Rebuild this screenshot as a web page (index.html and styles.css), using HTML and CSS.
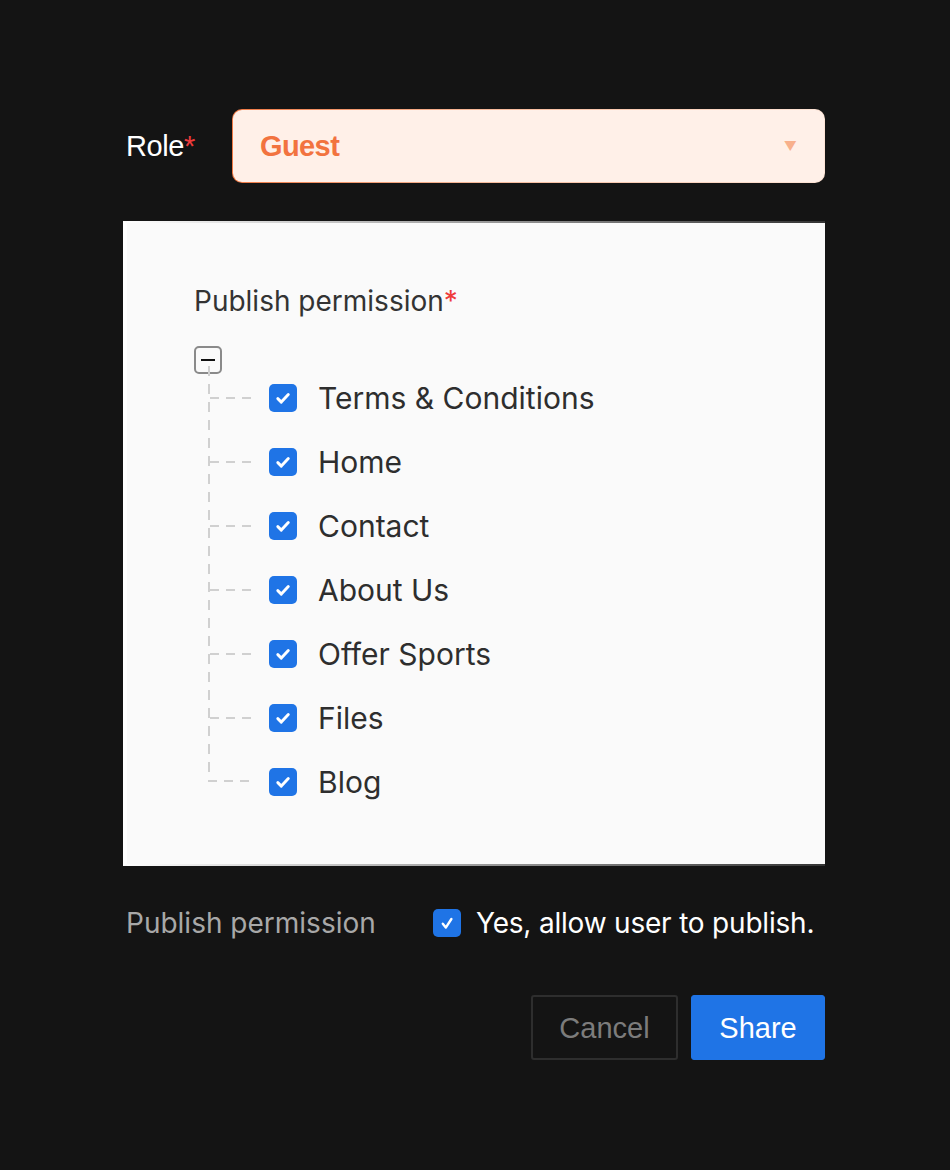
FILE: index.html
```html
<!DOCTYPE html>
<html>
<head>
<meta charset="utf-8">
<link rel="stylesheet" href="styles.css">
</head>
<body>
<div class="page">
  <div class="role-row">
    <div class="role-label">Role<span class="req">*</span></div>
    <div class="select">
      <span class="select-value">Guest</span>
      <span class="select-arrow">&#9660;</span>
    </div>
  </div>

  <div class="panel">
    <div class="panel-title">Publish permission<span class="req">*</span></div>
    <div class="tree">
      <div class="collapse"><span class="minus"></span></div>
      <div class="children">
        <div class="item"><span class="branch"></span><span class="cb"><svg viewBox="0 0 28 28"><path d="M8.8 14.6l3.5 3.5 7-7.6" /></svg></span><span class="item-text">Terms &amp; Conditions</span></div>
        <div class="item"><span class="branch"></span><span class="cb"><svg viewBox="0 0 28 28"><path d="M8.8 14.6l3.5 3.5 7-7.6" /></svg></span><span class="item-text">Home</span></div>
        <div class="item"><span class="branch"></span><span class="cb"><svg viewBox="0 0 28 28"><path d="M8.8 14.6l3.5 3.5 7-7.6" /></svg></span><span class="item-text">Contact</span></div>
        <div class="item"><span class="branch"></span><span class="cb"><svg viewBox="0 0 28 28"><path d="M8.8 14.6l3.5 3.5 7-7.6" /></svg></span><span class="item-text">About Us</span></div>
        <div class="item"><span class="branch"></span><span class="cb"><svg viewBox="0 0 28 28"><path d="M8.8 14.6l3.5 3.5 7-7.6" /></svg></span><span class="item-text">Offer Sports</span></div>
        <div class="item"><span class="branch"></span><span class="cb"><svg viewBox="0 0 28 28"><path d="M8.8 14.6l3.5 3.5 7-7.6" /></svg></span><span class="item-text">Files</span></div>
        <div class="item last"><span class="branch"></span><span class="cb"><svg viewBox="0 0 28 28"><path d="M8.8 14.6l3.5 3.5 7-7.6" /></svg></span><span class="item-text">Blog</span></div>
      </div>
    </div>
  </div>

  <div class="publish-row">
    <div class="publish-label">Publish permission</div>
    <div class="publish-opt">
      <span class="cb small"><svg viewBox="0 0 28 28"><path d="M9.8 14.8l3 3.8 5.6-8.6" /></svg></span>
      <span class="publish-text">Yes, allow user to publish.</span>
    </div>
  </div>

  <div class="actions">
    <button class="btn cancel">Cancel</button>
    <button class="btn share">Share</button>
  </div>
</div>
</body>
</html>
```

FILE: styles.css
```css
html, body {
  margin: 0;
  padding: 0;
  background: #141414;
}
body {
  width: 950px;
  height: 1170px;
  font-family: Inter, "Noto Sans", sans-serif;
}
.page {
  padding: 109px 125px 0 123px;
  display: flex;
  flex-direction: column;
}
.req { color: #ef3b3b; }

.role-row {
  display: flex;
  align-items: center;
  height: 74px;
}
.role-label {
  width: 109px;
  padding-left: 3px;
  box-sizing: border-box;
  font-family: "Liberation Sans", Arial, sans-serif;
  font-size: 29px;
  color: #ffffff;
  letter-spacing: -0.4px;
}
.select {
  flex: 1;
  height: 74px;
  box-sizing: border-box;
  border-radius: 10px;
  background: #fff0e8;
  border: 1.5px solid transparent;
  background-image: linear-gradient(#fff0e8, #fff0e8), linear-gradient(90deg, #f07a45 0%, #f7b898 40%, #fde4d6 100%);
  background-origin: border-box;
  background-clip: padding-box, border-box;
  display: flex;
  align-items: center;
  padding: 0 27px 0 27px;
}
.select-value {
  flex: 1;
  font-family: "Liberation Sans", Arial, sans-serif;
  font-size: 29px;
  font-weight: bold;
  color: #f2733f;
  letter-spacing: -0.6px;
}
.select-arrow {
  color: #f8b08c;
  font-size: 13px;
}

.panel {
  margin-top: 38px;
  height: 645px;
  box-sizing: border-box;
  background: #fafafa;
  border-left: 4px solid #ffffff;
  border-top: 2px solid transparent;
  border-bottom: 2px solid transparent;
  background-image: linear-gradient(#fafafa, #fafafa), linear-gradient(90deg, #ffffff 0%, #888 60%, #333 100%);
  background-origin: border-box;
  background-clip: padding-box, border-box;
  padding: 60px 0 0 67px;
}
.panel-title {
  font-size: 28px;
  color: #333333;
  line-height: 36px;
}
.tree {
  margin-top: 27px;
}
.collapse {
  width: 28px;
  height: 28px;
  box-sizing: border-box;
  border: 2px solid #8a8a8a;
  border-radius: 5px;
  display: flex;
  align-items: center;
  justify-content: center;
}
.minus {
  width: 14px;
  height: 2px;
  background: #111;
}
.children {
  margin-left: 14px;
  margin-top: 8px;
  background-image: repeating-linear-gradient(180deg, #d0d0d0 0 10px, transparent 10px 18px);
  background-size: 2px 100%;
  background-repeat: no-repeat;
  background-position: 0 0;
}
.item {
  height: 64px;
  display: flex;
  align-items: center;
}
.item:first-child { margin-top: -16px; }
.item.last { height: 32px; align-items: flex-end; }
.item.last .cb { margin-bottom: -14px; }
.item.last .branch { align-self: flex-end; }
.item.last .item-text { margin-bottom: -18px; }
.branch {
  width: 44px;
  height: 2px;
  background-image: repeating-linear-gradient(90deg, #d0d0d0 0 9px, transparent 9px 16px);
  margin-left: 2px;
  margin-right: 15px;
}
.item.last .branch {
  width: 46px;
  margin-left: 0;
}
.cb {
  width: 28px;
  height: 28px;
  border-radius: 5px;
  background: #1f74e6;
  display: inline-flex;
  flex-shrink: 0;
}
.cb svg {
  width: 28px;
  height: 28px;
  fill: none;
  stroke: #ffffff;
  stroke-width: 2.9;
  stroke-linecap: round;
  stroke-linejoin: round;
}
.item-text {
  margin-left: 21px;
  font-size: 30px;
  color: #2e2e2e;
}

.publish-row {
  margin-top: 37px;
  display: flex;
  align-items: center;
  height: 40px;
}
.publish-label {
  width: 310px;
  box-sizing: border-box;
  padding-left: 3px;
  font-size: 28px;
  color: #a8a8a8;
}
.publish-opt {
  display: flex;
  align-items: center;
}
.cb.small svg { stroke-width: 2.4; }
.publish-text {
  margin-left: 15px;
  font-size: 28px;
  color: #ffffff;
  letter-spacing: -0.2px;
}

.actions {
  margin-top: 52px;
  display: flex;
  justify-content: flex-end;
  gap: 13px;
}
.btn {
  height: 65px;
  box-sizing: border-box;
  font-family: "Liberation Sans", Arial, sans-serif;
  font-size: 29px;
  border-radius: 3px;
  cursor: pointer;
  padding-top: 3px;
}
.cancel {
  width: 147px;
  background: transparent;
  border: 2px solid #2e2e2e;
  color: #7c7c7c;
}
.share {
  width: 134px;
  background: #1f74e6;
  border: 1px solid #1f74e6;
  color: #ffffff;
}
```
